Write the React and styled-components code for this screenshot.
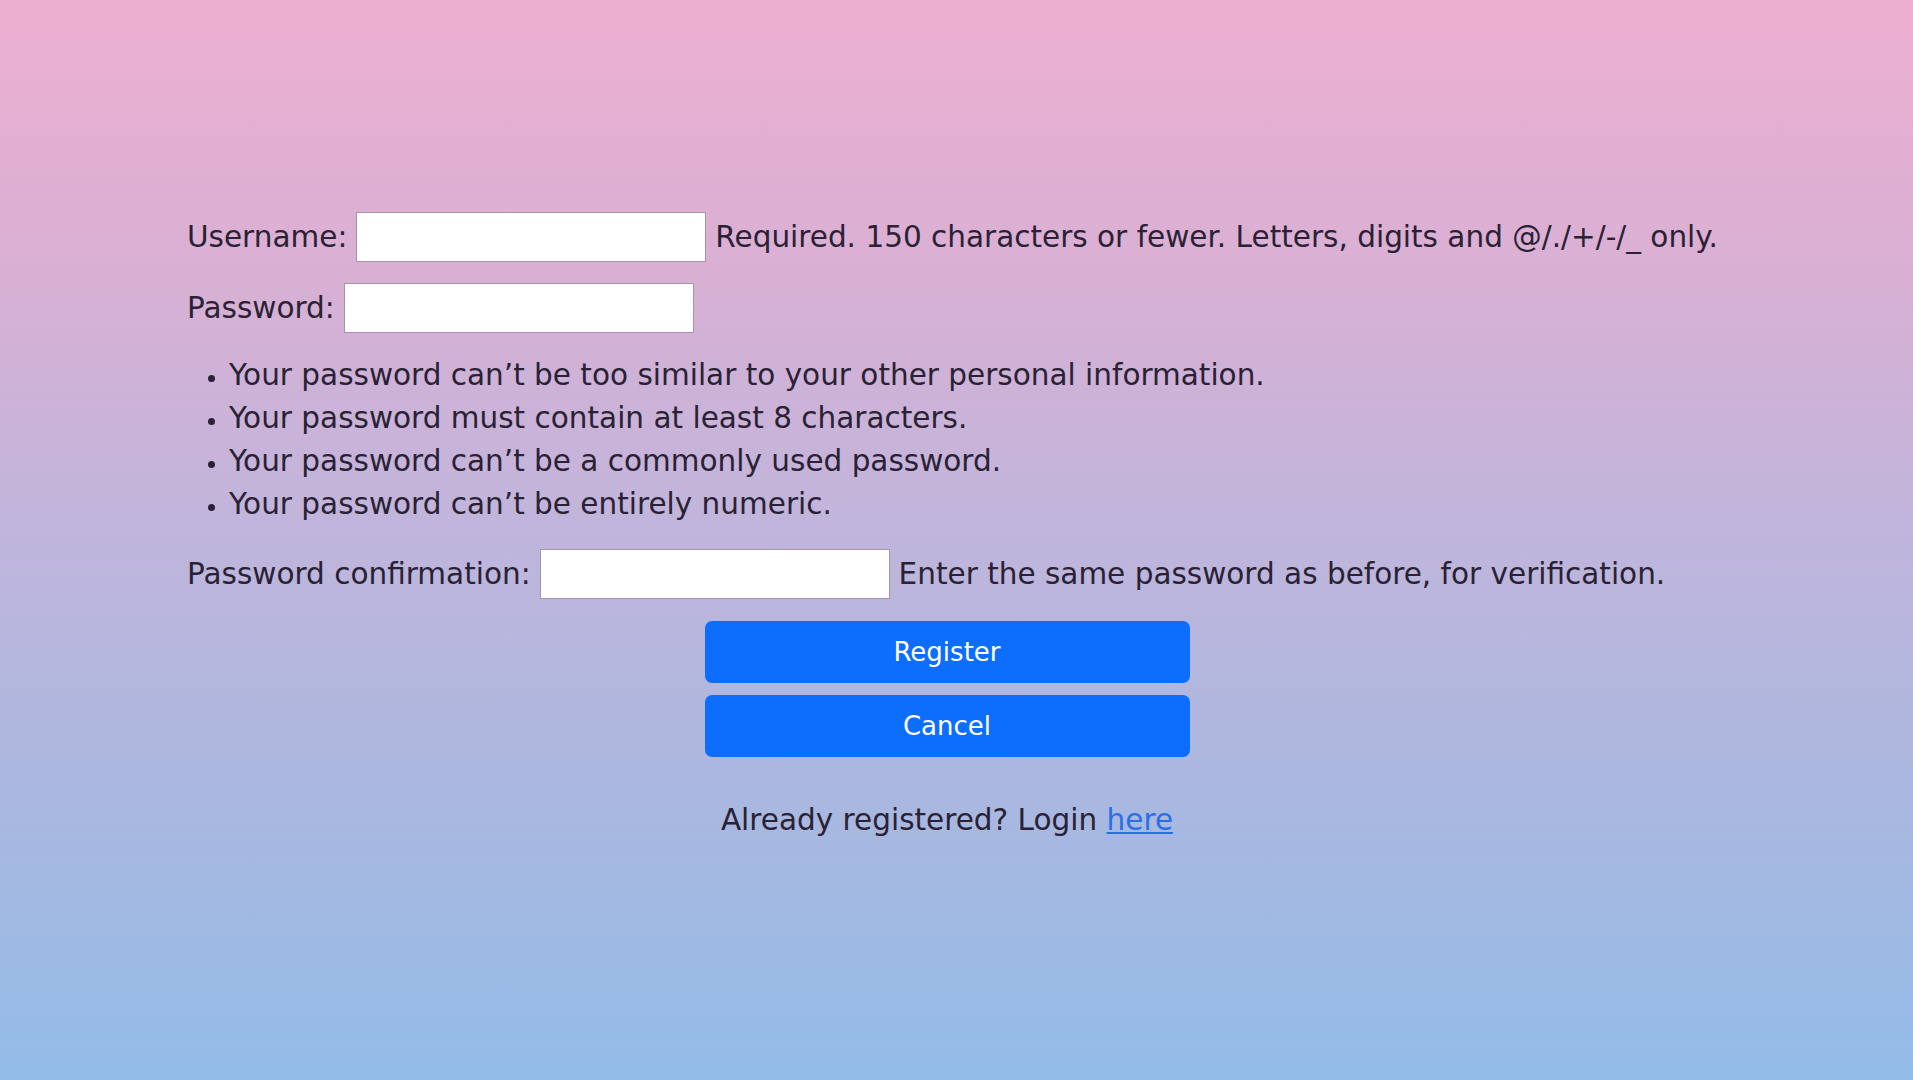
import React from "react";
import styled, { createGlobalStyle } from "styled-components";

const GlobalStyle = createGlobalStyle`
  html, body {
    margin: 0;
    padding: 0;
  }
  body {
    min-height: 1080px;
    background: linear-gradient(
      to bottom,
      #edafd0 0%,
      #d9b0d4 25%,
      #bfb5dc 50%,
      #a9b8e0 75%,
      #93bce8 100%
    );
    font-family: "DejaVu Sans", "Noto Sans", sans-serif;
    color: #2a2234;
  }
`;

const Page = styled.main`
  padding-top: 212px;
  padding-left: 187px;
  width: 1520px;
`;

const Form = styled.form`
  display: flex;
  flex-direction: column;
  font-size: 29.5px;
  line-height: 43px;
`;

const Row = styled.p`
  margin: 0 0 ${p => p.gap || 21}px;
  display: flex;
  align-items: center;
  gap: 9px;
  white-space: nowrap;
`;

const Label = styled.label`
  display: inline-block;
`;

const Input = styled.input`
  box-sizing: border-box;
  width: 350px;
  height: 50px;
  margin: 0;
  border: 1px solid #a993ac;
  background: #fff;
  font: inherit;
  padding: 0 8px;
`;

const HelpText = styled.span`
  color: #2a2234;
`;

const Rules = styled.ul`
  margin: 0 0 23px;
  padding-left: 42px;
  list-style: disc;

  li::marker {
    font-size: 24px;
  }
`;

const Actions = styled.div`
  display: flex;
  flex-direction: column;
  align-items: center;
  gap: 12px;
  margin-top: 1px;
`;

const Button = styled.button`
  box-sizing: border-box;
  width: 485px;
  height: 62px;
  border: none;
  border-radius: 7px;
  background: #0d6efd;
  color: #fff;
  font: inherit;
  font-size: 26px;
  line-height: 1;
  cursor: pointer;
`;

const Footer = styled.p`
  margin: 42px 0 0;
  text-align: center;
  font-size: 29.5px;
  line-height: 43px;
`;

const Link = styled.a`
  color: #2a6fe6;
  text-decoration: underline;
`;

export default function App() {
  return (
    <Page>
      <GlobalStyle />
      <Form onSubmit={e => e.preventDefault()}>
        <Row>
          <Label htmlFor="id_username">Username:</Label>
          <Input id="id_username" type="text" />
          <HelpText>
            Required. 150 characters or fewer. Letters, digits and @/./+/-/_ only.
          </HelpText>
        </Row>
        <Row gap={21}>
          <Label htmlFor="id_password1">Password:</Label>
          <Input id="id_password1" type="password" />
        </Row>
        <Rules>
          <li>Your password can’t be too similar to your other personal information.</li>
          <li>Your password must contain at least 8 characters.</li>
          <li>Your password can’t be a commonly used password.</li>
          <li>Your password can’t be entirely numeric.</li>
        </Rules>
        <Row gap={21}>
          <Label htmlFor="id_password2">Password confirmation:</Label>
          <Input id="id_password2" type="password" />
          <HelpText>Enter the same password as before, for verification.</HelpText>
        </Row>
        <Actions>
          <Button type="submit">Register</Button>
          <Button type="button">Cancel</Button>
        </Actions>
      </Form>
      <Footer>
        Already registered? Login <Link href="#">here</Link>
      </Footer>
    </Page>
  );
}
